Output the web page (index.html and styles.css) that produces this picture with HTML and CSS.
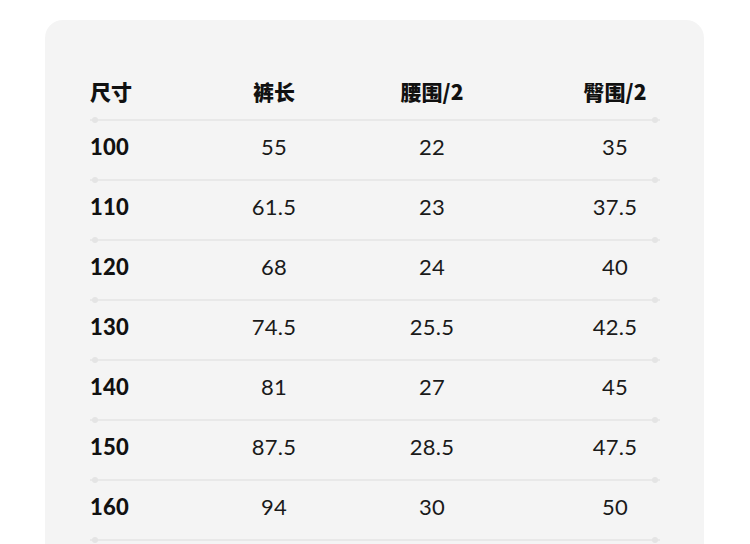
FILE: index.html
```html
<!DOCTYPE html>
<html lang="zh">
<head>
<meta charset="utf-8">
<link rel="stylesheet" href="styles.css">
</head>
<body>
<div class="card">
  <div class="row head">
    <div class="c1">尺寸</div><div class="c">裤长</div><div class="c">腰围/2</div><div class="c">臀围/2</div>
  </div>
  <div class="sep"></div>
  <div class="row"><div class="c1">100</div><div class="c">55</div><div class="c">22</div><div class="c">35</div></div>
  <div class="sep"></div>
  <div class="row"><div class="c1">110</div><div class="c">61.5</div><div class="c">23</div><div class="c">37.5</div></div>
  <div class="sep"></div>
  <div class="row"><div class="c1">120</div><div class="c">68</div><div class="c">24</div><div class="c">40</div></div>
  <div class="sep"></div>
  <div class="row"><div class="c1">130</div><div class="c">74.5</div><div class="c">25.5</div><div class="c">42.5</div></div>
  <div class="sep"></div>
  <div class="row"><div class="c1">140</div><div class="c">81</div><div class="c">27</div><div class="c">45</div></div>
  <div class="sep"></div>
  <div class="row"><div class="c1">150</div><div class="c">87.5</div><div class="c">28.5</div><div class="c">47.5</div></div>
  <div class="sep"></div>
  <div class="row"><div class="c1">160</div><div class="c">94</div><div class="c">30</div><div class="c">50</div></div>
  <div class="sep"></div>
</div>
</body>
</html>
```
FILE: styles.css
```css
html, body {
  margin: 0;
  padding: 0;
  background: #ffffff;
  overflow: hidden;
  height: 544px;
}
.card {
  margin: 20px 0 0 45px;
  width: 659px;
  height: 524px;
  overflow: hidden;
  box-sizing: border-box;
  background: #f4f4f4;
  border-radius: 18px 18px 0 0;
  padding: 45px 0 0 45px;
  font-family: "Lato", "Noto Sans CJK SC", sans-serif;
  color: #1a1a1a;
}
.row {
  display: grid;
  grid-template-columns: 110px 148px 168px 198px;
  align-items: center;
  height: 58px;
  box-sizing: border-box;
  padding-bottom: 7px;
  font-size: 22px;
  letter-spacing: 0.3px;
}
.row.head {
  height: 54px;
  padding-bottom: 2px;
  font-family: "Noto Sans CJK SC", sans-serif;
  font-weight: 900;
  font-size: 21px;
  letter-spacing: 0;
  color: #111;
}
.c1 {
  font-weight: 900;
  color: #111;
}
.c {
  text-align: center;
}
.sep {
  position: relative;
  width: 570px;
  height: 2px;
  background: #e8e8e8;
}
.sep::before, .sep::after {
  content: "";
  position: absolute;
  top: -2px;
  width: 6px;
  height: 6px;
  border-radius: 50%;
  background: #e4e4e4;
}
.sep::before { left: 2px; }
.sep::after { right: 2px; }
```
